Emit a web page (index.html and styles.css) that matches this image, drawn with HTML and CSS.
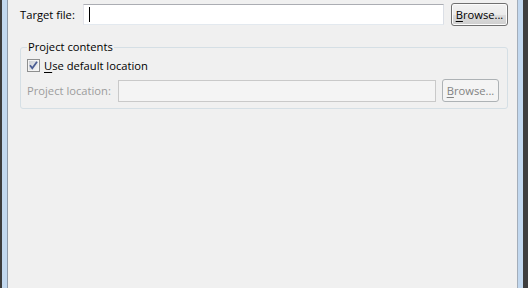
FILE: index.html
```html
<!DOCTYPE html>
<html lang="en">
<head>
    <meta charset="UTF-8">
    <title>Export</title>
    <link rel="stylesheet" href="styles.css">
</head>
<body>
    <div class="window">
        <div class="frame frame-left"></div>

        <div class="content">
            <!-- target file -->
            <div class="file-row">
                <label class="label" for="targetFile">Target file:</label>
                <div class="text-field" id="targetFile"><span class="caret"></span></div>
                <button class="btn"><u>B</u>rowse...</button>
            </div>

            <!-- project contents -->
            <fieldset class="group">
                <legend>Project contents</legend>
                <label class="check-row">
                    <span class="checkbox">
                        <svg width="13" height="13" viewBox="0 0 13 13">
                            <defs>
                                <linearGradient id="boxFill" x1="0" y1="0" x2="1" y2="1">
                                    <stop offset="0" stop-color="#cbcfd5"/>
                                    <stop offset="1" stop-color="#f6f6f6"/>
                                </linearGradient>
                            </defs>
                            <rect x="0.5" y="0.5" width="12" height="12" fill="#f4f4f4" stroke="#8e8f8f"/>
                            <rect x="2" y="2" width="9" height="9" fill="url(#boxFill)"/>
                            <path d="M3 6.2 L5.3 9.2 L10 2.8" fill="none" stroke="#4a5c93" stroke-width="1.8"/>
                        </svg>
                    </span>
                    <span><u>U</u>se default location</span>
                </label>
                <div class="location-row">
                    <span class="label">Project location:</span>
                    <div class="text-field disabled"></div>
                    <button class="btn" disabled><u>B</u>rowse...</button>
                </div>
            </fieldset>
        </div>

        <div class="frame frame-right"></div>
    </div>
</body>
</html>
```

FILE: styles.css
```css
/* 基本樣式 */
body {
    margin: 0;
    font-family: "Open Sans", "Noto Sans", sans-serif;
    font-size: 11.2px;
    color: #000;
}

.window {
    display: flex;
    height: 100vh;
    background-color: #f0f0f0;
}

/* 視窗邊框 */
.frame {
    flex: none;
    background-color: #c2d8ef;
}

.frame-left {
    width: 5px;
    border-left: 2px solid #3c3c3c;
    border-right: 1px solid #8f9baa;
}

.frame-right {
    width: 5px;
    border-left: 1px solid #a3adb9;
    border-right: 5px solid #3e3e3e;
}

.content {
    flex: 1;
    padding: 3px 9px 0 12px;
}

.label {
    flex: none;
    line-height: 16px;
}

/* 檔案列 */
.file-row {
    display: flex;
    align-items: center;
}

.file-row .label {
    width: 63px;
}

.text-field {
    flex: 1;
    height: 19px;
    border: 1px solid #abadb3;
    border-color: #abadb3 #dbdfe6 #e3e9ef #e2e3ea;
    background-color: #fff;
    display: flex;
    align-items: center;
    padding-left: 5px;
}

.file-row .text-field {
    margin-right: 7px;
}

.caret {
    width: 1px;
    height: 15px;
    background-color: #000;
}

.text-field.disabled {
    flex: none;
    width: 316px;
    height: 20px;
    padding: 0;
    border-color: #c9c9c9;
    background-color: #f4f4f4;
}

.btn {
    flex: none;
    width: 57px;
    height: 23px;
    padding: 0 0 1px;
    font: inherit;
    color: #000;
    border: 1px solid #707070;
    border-radius: 3px;
    background: linear-gradient(#f2f2f2 0%, #ebebeb 50%, #dddddd 51%, #cfcfcf 100%);
    box-shadow: inset 0 0 0 1px #fcfcfc;
}

.btn:disabled {
    color: #838383;
    border-color: #adb2b5;
    background: #f4f4f4;
    box-shadow: none;
}

.btn u,
.check-row u {
    text-decoration-thickness: 1px;
    text-underline-offset: 2px;
}

/* 群組框 */
.group {
    margin: 13px 0 0;
    padding: 2px 8px 6px 6px;
    border: 1px solid #d5dfe5;
    border-radius: 3px;
}

.group legend {
    padding: 0 1px;
    line-height: 16px;
}

.check-row {
    display: flex;
    align-items: center;
    gap: 4px;
    height: 16px;
}

.checkbox {
    display: flex;
    width: 13px;
    height: 13px;
}

.location-row {
    display: flex;
    align-items: center;
    margin-top: 6px;
    color: #9c9c9c;
}

.location-row .label {
    width: 91px;
}

.location-row .text-field {
    margin-right: 6px;
}
```
